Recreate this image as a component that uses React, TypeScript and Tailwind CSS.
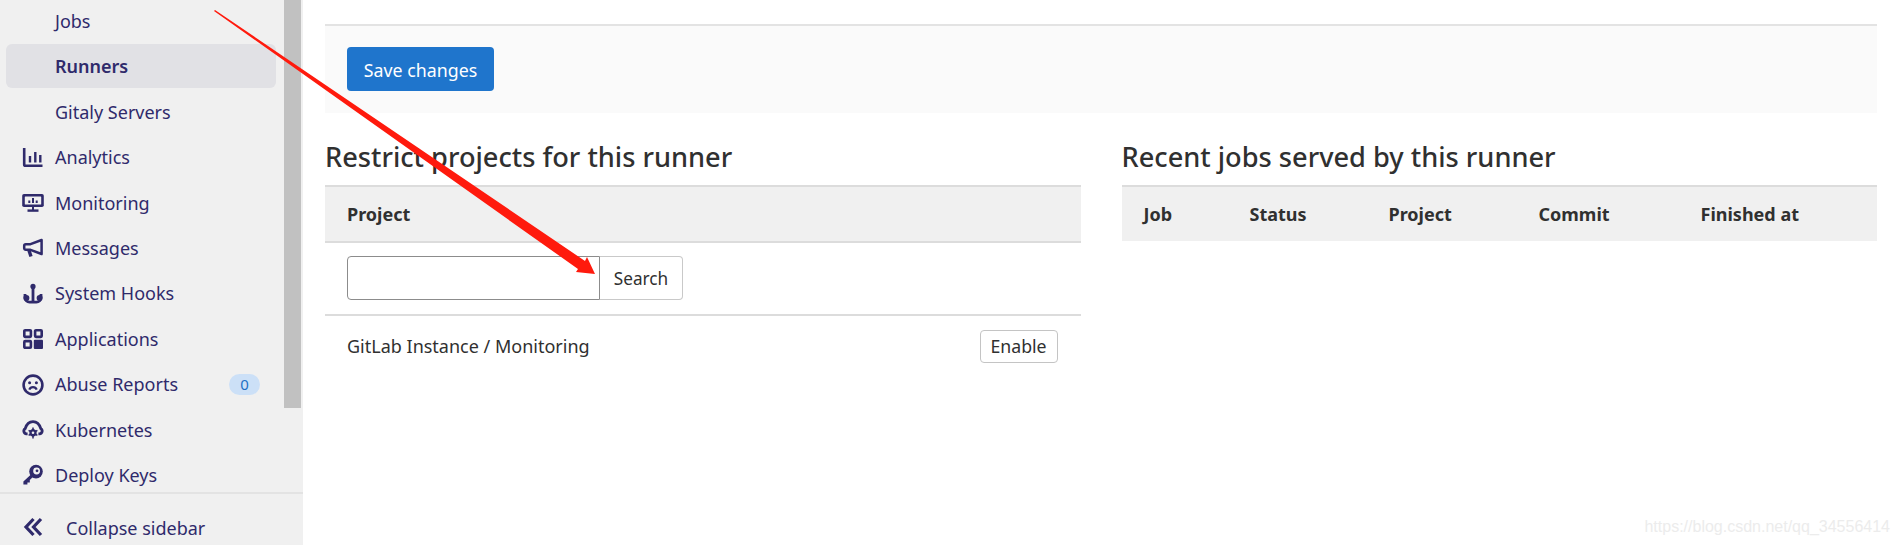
import React from "react";

const Ic = ({ children }: { children: React.ReactNode }) => (
  <svg viewBox="0 0 20 20" className="h-5 w-5 shrink-0 overflow-visible text-[#2f2a6b]" fill="none" stroke="currentColor" strokeWidth="2.4" aria-hidden="true">
    {children}
  </svg>
);

const icons: Record<string, React.ReactNode> = {
  Analytics: (
    <>
      <path d="M1.2 0v16.5a1.3 1.3 0 0 0 1.3 1.3H19.5" strokeWidth="2.6" />
      <path d="M7 8v6.5M12.3 4v10.5M17.3 7v7.5" strokeWidth="2.4" />
    </>
  ),
  Monitoring: (
    <>
      <rect x="-0.8" y="1" width="21.6" height="13" rx="1.8" fill="currentColor" stroke="none" />
      <rect x="1.8" y="3.4" width="16.4" height="8.2" rx="0.5" fill="#f0f0f0" stroke="none" />
      <path d="M6.3 7.5v2.6M10 5v5.1M13.7 7.5v2.6" strokeWidth="2" />
      <path d="M10 14v3" strokeWidth="2" />
      <path d="M4.5 17.6h11" strokeWidth="2.4" />
    </>
  ),
  Messages: (
    <>
      <path d="M18.6 2 7.5 6.2H2.8A1.6 1.6 0 0 0 1.2 7.8v2.4a1.6 1.6 0 0 0 1.6 1.6h4.7L18.6 16z" strokeWidth="2.5" strokeLinejoin="round" />
      <path d="M6 12.5l2 6" strokeWidth="3.4" />
    </>
  ),
  "System Hooks": (
    <>
      <circle cx="10" cy="2.4" r="2.6" fill="currentColor" stroke="none" />
      <path d="M10 3v14.5" strokeWidth="2.8" />
      <path d="M2 10v3.5a4.6 4.6 0 0 0 4.6 4.6h6.8a4.6 4.6 0 0 0 4.6-4.6V10" strokeWidth="2.8" />
      <circle cx="3.4" cy="14" r="3" fill="currentColor" stroke="none" />
      <circle cx="16.6" cy="14" r="3" fill="currentColor" stroke="none" />
    </>
  ),
  Applications: (
    <>
      <rect x="1.3" y="1.3" width="6.6" height="6.6" rx="0.8" strokeWidth="2.6" />
      <rect x="12.1" y="1.3" width="6.6" height="6.6" rx="0.8" strokeWidth="2.6" />
      <rect x="1.3" y="12.1" width="6.6" height="6.6" rx="0.8" strokeWidth="2.6" />
      <rect x="10.8" y="10.8" width="9.2" height="9.2" rx="1" fill="currentColor" stroke="none" />
    </>
  ),
  "Abuse Reports": (
    <>
      <circle cx="10" cy="10" r="9.4" strokeWidth="2.6" />
      <circle cx="6.6" cy="7.8" r="1.5" fill="currentColor" stroke="none" />
      <circle cx="13.4" cy="7.8" r="1.5" fill="currentColor" stroke="none" />
      <path d="M6.3 14.6a4 4 0 0 1 7.4 0" strokeWidth="2.2" />
    </>
  ),
  Kubernetes: (
    <>
      <path d="M4.6 13.8H3.4a2.8 2.8 0 0 1-1.2-5.2C3.4 4.6 6.4 1.6 10 1.6s6.6 3 7.8 7a2.8 2.8 0 0 1-1.2 5.2h-1.2" strokeWidth="2.8" />
      <path d="M10 8.6l3.6 2.1v4.2L10 17l-3.6-2.1v-4.2z" fill="currentColor" stroke="none" />
      <path d="M10 7.6v11M5.6 10.4l8.8 5M14.4 10.4l-8.8 5" strokeWidth="1.5" />
      <circle cx="10" cy="12.8" r="1.3" fill="#f0f0f0" stroke="none" />
    </>
  ),
  "Deploy Keys": (
    <>
      <circle cx="13" cy="6.6" r="6.8" fill="currentColor" stroke="none" />
      <circle cx="13.6" cy="6" r="3.4" fill="#f0f0f0" stroke="none" />
      <circle cx="14" cy="5.8" r="1.4" fill="currentColor" stroke="none" />
      <path d="M8.5 9 0.4 16.4V19.6H4.4V17.4H6.8V15L11 11z" fill="currentColor" stroke="none" />
    </>
  ),
};

const subItems = ["Jobs", "Runners", "Gitaly Servers"];
const items = ["Analytics", "Monitoring", "Messages", "System Hooks", "Applications", "Abuse Reports", "Kubernetes", "Deploy Keys"];

export default function App() {
  return (
    <div className="relative flex h-[545px] w-[1899px] overflow-hidden bg-white font-['Noto_Sans',sans-serif] text-[#303030]">
      <aside className="relative flex w-[303px] shrink-0 flex-col bg-[#f0f0f0] text-[#2f2a6b]">
        <nav className="-mt-px flex h-[493px] flex-col overflow-hidden pl-[6px] pr-[27px]">
          {subItems.map((s) => (
            <div
              key={s}
              className={`mb-[1.4px] flex h-[44px] shrink-0 items-center rounded-md pl-[49px] pt-[1px] text-[18px] ${s === "Runners" ? "bg-[#e1e1e5] font-semibold" : ""}`}
            >
              {s}
            </div>
          ))}
          {items.map((s) => (
            <div key={s} className="mb-[1.4px] flex h-[44px] shrink-0 items-center gap-[12px] pl-[17px] pt-[1px] text-[18px]">
              <Ic>{icons[s]}</Ic>
              <span className="flex-1">{s}</span>
              {s === "Abuse Reports" && (
                <span className="mr-[16px] flex h-[21px] w-[31px] items-center justify-center rounded-full bg-[#cce0f7] text-[15px] text-[#1f70c4]">0</span>
              )}
            </div>
          ))}
        </nav>
        <div className="flex flex-1 items-start gap-[23px] border-t-2 border-[#e3e3e3] pl-[23px] pt-[23px] text-[18px]">
          <svg viewBox="0 0 20 20" className="h-5 w-5 shrink-0 text-[#2f2a6b]" fill="none" stroke="currentColor" strokeWidth="3.2" aria-hidden="true">
            <path d="M10.5 2 3 10l7.5 8M18 2l-7.5 8 7.5 8" />
          </svg>
          <span className="leading-[22px]">Collapse sidebar</span>
        </div>
        <div className="absolute left-[284px] top-0 h-[408px] w-[17px] bg-[#c1c1c1]" />
      </aside>

      <main className="flex-1 pl-[22px] pr-[22px] pt-[24px]">
        <div className="flex h-[89px] items-start border-t-2 border-[#e3e3e3] bg-[#fafafa] pl-[22px] pt-[21px]">
          <button className="h-[44px] w-[147px] rounded-[4px] bg-[#1f75cc] pt-[2px] text-[17.8px] text-white">Save changes</button>
        </div>

        <div className="grid grid-cols-2 gap-[41px] pt-[21px]">
          <section>
            <h2 className="mb-[10px] h-[41px] pt-[2px] text-[27.2px] font-medium leading-[41px]">Restrict projects for this runner</h2>
            <div className="flex h-[58px] items-center border-y-2 border-[#dcdcdc] bg-[#f0f0f0] pl-[22px] pt-[1px] text-[18px] font-bold">Project</div>
            <div className="flex h-[73px] items-start border-b-2 border-[#dcdcdc] pl-[22px] pt-[13px]">
              <input className="h-[44px] w-[253px] rounded-l-[4px] border border-[#8c8c8c] bg-white" aria-label="Search" />
              <button className="h-[44px] w-[83px] rounded-r-[4px] border border-l-0 border-[#c9c9c9] pt-[1px] text-[17.2px]">Search</button>
            </div>
            <div className="flex h-[60px] items-center justify-between pl-[22px] pr-[23px] text-[18px]">
              <span>GitLab Instance / Monitoring</span>
              <button className="h-[33px] w-[78px] rounded-[4px] border border-[#c4c4c4] pt-[1px] text-[17.7px]">Enable</button>
            </div>
          </section>
          <section>
            <h2 className="mb-[10px] h-[41px] pt-[2px] text-[27.2px] font-medium leading-[41px]">Recent jobs served by this runner</h2>
            <div className="grid h-[56px] grid-cols-[106px_139px_150px_162px_1fr] items-center border-t-2 border-[#dcdcdc] bg-[#f0f0f0] pl-[22px] pt-[1px] text-[18px] font-bold">
              <span>Job</span>
              <span>Status</span>
              <span>Project</span>
              <span>Commit</span>
              <span>Finished at</span>
            </div>
          </section>
        </div>
      </main>

      <svg className="pointer-events-none absolute left-0 top-0" width="1899" height="545" aria-hidden="true">
        <polygon points="215,10 585,261 587,257 595,274 576,272 578,269 214,11" fill="#ff1a0d" />
      </svg>
      <div className="pointer-events-none absolute bottom-[8px] right-[9px] font-['Liberation_Sans',sans-serif] text-[16px] leading-[20px] text-[#ececec]">https://blog.csdn.net/qq_34556414</div>
    </div>
  );
}
